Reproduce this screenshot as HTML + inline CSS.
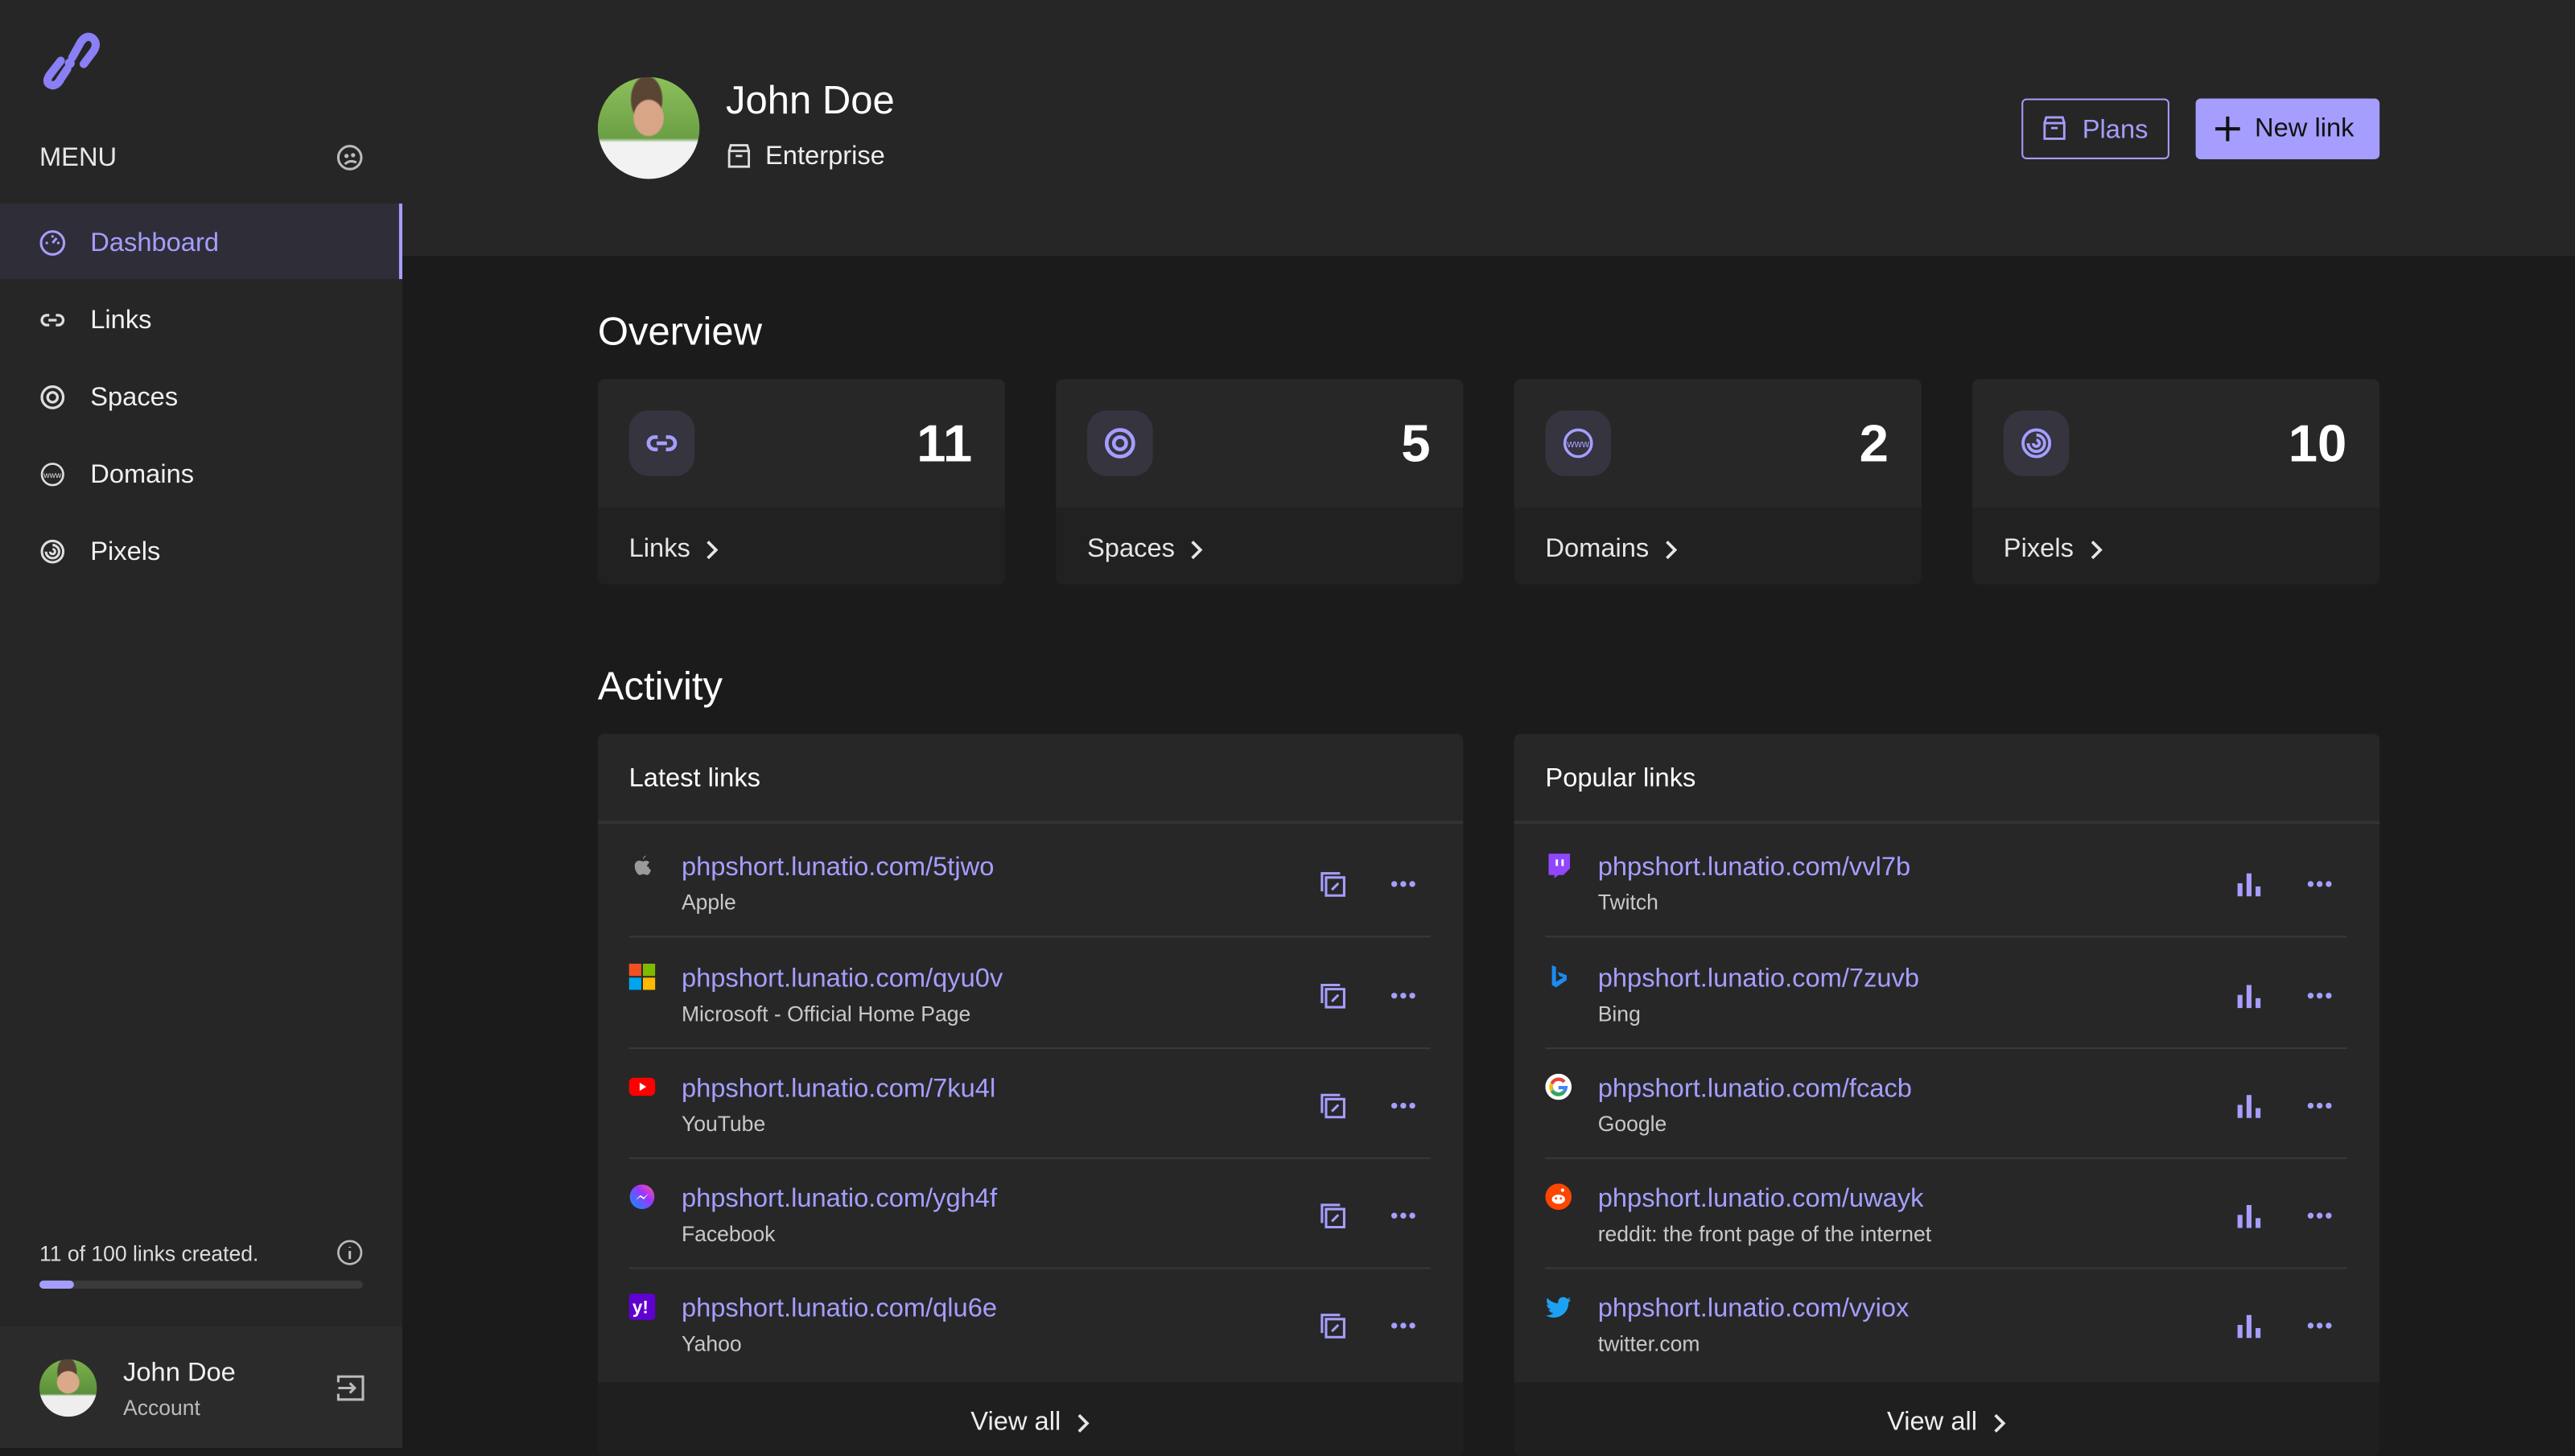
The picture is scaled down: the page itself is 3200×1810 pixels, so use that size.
<!DOCTYPE html>
<html><head><meta charset="utf-8">
<style>
*{box-sizing:border-box;margin:0;padding:0}
html,body{width:3200px;height:1800px;overflow:hidden;background:#1b1b1b}
#w{position:absolute;left:0;top:0;width:1568px;height:882px;transform:scale(2.04082);transform-origin:0 0;font-family:"Liberation Sans",sans-serif;color:#eee;background:#1b1b1b}
.a{position:absolute}
.side{left:0;top:0;width:245px;height:882px;background:#262626}
.nav{position:absolute;left:0;width:245px;height:46px;display:flex;align-items:center;padding-left:24px;padding-top:3px;font-size:16px;color:#f0f0f0}
.nav svg{width:16px;height:16px;margin-right:15px;margin-top:-2px}
.hdr{left:245px;top:0;width:1323px;height:156px;background:#262626}
.card{position:absolute;top:231px;width:248px;height:125px;border-radius:4px;overflow:hidden;background:#212121}
.card .t{height:78px;background:#272727;position:relative}
.card .ib{position:absolute;left:19px;top:19px;width:40px;height:40px;border-radius:12px;background:#35343f;display:flex;align-items:center;justify-content:center}
.card .n{position:absolute;right:20px;top:21px;font-size:32px;font-weight:bold;color:#fff}
.card .l{padding:17px 19px;font-size:16px;color:#e6e6e6;display:flex;align-items:center}
.chev{margin-left:8px}
.panel{position:absolute;top:447px;width:527px;height:440px;background:#272727;border-radius:4px;overflow:hidden}
.panel .h{height:55px;border-bottom:2px solid #333;padding:19px 19px;font-size:16px;color:#fff}
.row{position:absolute;left:19px;width:488px;height:67px;border-bottom:1px solid #393939}
.row .u{position:absolute;left:32px;top:16px;font-size:16px;color:#a59eff}
.row .s{position:absolute;left:32px;top:38px;font-size:13px;color:#c8c8c8}
.row .fi{position:absolute;left:0;top:15px;width:16px;height:16px}
.row .b1{position:absolute;left:420px;top:26px}
.row .b2{position:absolute;left:463px;top:26px}
.foot{position:absolute;left:0;bottom:0;width:527px;height:46px;background:#1f1f1f;font-size:16px;color:#eee;display:flex;justify-content:center;align-items:center;padding-top:4px}
</style></head><body><div id="w">
<div class="a side"></div>
<svg class="a" style="left:22px;top:15px" width="40" height="40" viewBox="0 0 40 40"><path d="M15 22 L8 31 Q5 36 10 37 Q13 37 15 33 L19 27" fill="none" stroke="#8a7ff5" stroke-width="5" stroke-linecap="round"/><path d="M22 20 L27 11 Q30 6 34 8 Q38 11 35 16 L29 24" fill="none" stroke="#8a7ff5" stroke-width="5" stroke-linecap="round"/><circle cx="20.5" cy="23.5" r="3" fill="#8a7ff5"/></svg>
<div class="a" style="left:24px;top:88px;font-size:16px;color:#e8e8e8">MENU</div>
<svg class="a" style="left:205px;top:88px" width="16" height="16" viewBox="0 0 16 16"><circle cx="8" cy="8" r="7" fill="none" stroke="#bbb" stroke-width="1.5"/><circle cx="6" cy="7" r="1.3" fill="#bbb"/><circle cx="10" cy="6.5" r="1.3" fill="#bbb"/><path d="M5 12 Q8 9 12 11" stroke="#bbb" fill="none" stroke-width="1.5"/></svg>
<div class="nav" style="top:124px;background:#2f2e38;border-right:2px solid #a59eff;color:#a59eff"><svg viewBox="0 0 16 16"><circle cx="8" cy="8" r="7" fill="none" stroke="#a59eff" stroke-width="1.5"/><path d="M8 8 L10.5 5" stroke="#a59eff" stroke-width="1.5"/><circle cx="8" cy="4" r=".8" fill="#a59eff"/><circle cx="4.5" cy="8" r=".8" fill="#a59eff"/><circle cx="11.5" cy="8" r=".8" fill="#a59eff"/></svg>Dashboard</div>
<div class="nav" style="top:171px"><svg viewBox="0 0 16 16"><path d="M6 5 H4.5 a3 3 0 0 0 0 6 H6 M10 5 h1.5 a3 3 0 0 1 0 6 H10 M5.5 8 h5" fill="none" stroke="#ddd" stroke-width="1.6"/></svg>Links</div>
<div class="nav" style="top:218px"><svg viewBox="0 0 16 16"><circle cx="8" cy="8" r="6.5" fill="none" stroke="#ddd" stroke-width="1.6"/><circle cx="8" cy="8" r="3" fill="none" stroke="#ddd" stroke-width="1.6"/></svg>Spaces</div>
<div class="nav" style="top:265px"><svg viewBox="0 0 16 16"><circle cx="8" cy="8" r="6.5" fill="none" stroke="#ddd" stroke-width="1.3"/><text x="8" y="10" font-size="5" fill="#ddd" text-anchor="middle" font-family="Liberation Sans">www</text></svg>Domains</div>
<div class="nav" style="top:312px"><svg viewBox="0 0 16 16"><circle cx="8" cy="8" r="6.5" fill="none" stroke="#ddd" stroke-width="1.5"/><path d="M8 4 a4 4 0 1 1 -4 4 M8 6.5 a1.5 1.5 0 1 1 -1.5 1.5" fill="none" stroke="#ddd" stroke-width="1.5"/></svg>Pixels</div>
<div class="a" style="left:24px;top:756px;font-size:13px;color:#ddd">11 of 100 links created.</div>
<svg class="a" style="left:205px;top:755px" width="16" height="16" viewBox="0 0 16 16"><circle cx="8" cy="8" r="7" fill="none" stroke="#bbb" stroke-width="1.3"/><path d="M8 7 v5 M8 4.5 v.5" stroke="#bbb" stroke-width="1.5"/></svg>
<div class="a" style="left:24px;top:780px;width:197px;height:5px;border-radius:3px;background:#3a3a3a"><div style="width:21px;height:5px;border-radius:3px;background:#a59eff"></div></div>
<div class="a" style="left:0;top:808px;width:245px;height:74px;background:#2b2b2c"></div>
<div class="a" style="left:24px;top:828px;width:35px;height:35px;border-radius:50%;background:radial-gradient(circle at 50% 40%,#d9a98a 0 24%,transparent 26%),radial-gradient(ellipse at 48% 22%,#5a4535 0 22%,transparent 24%),linear-gradient(#7bb24d,#5b8f3a 60%,#eee 64%)"></div>
<div class="a" style="left:75px;top:828px;font-size:16px;color:#f0f0f0">John Doe</div>
<div class="a" style="left:75px;top:850px;font-size:13px;color:#bbb">Account</div>
<svg class="a" style="left:205px;top:837px" width="17" height="17" viewBox="0 0 17 17"><path d="M1 5 V1.5 H16 V15.5 H1 V12 M1 8.5 H11 M8 5.5 L11 8.5 L8 11.5" fill="none" stroke="#bbb" stroke-width="1.5"/></svg>

<div class="a hdr"></div>
<div class="a" style="left:364px;top:47px;width:62px;height:62px;border-radius:50%;background:radial-gradient(ellipse at 50% 40%,#d8a587 0 20%,transparent 22%),radial-gradient(ellipse at 48% 22%,#5a4535 0 20%,transparent 22%),linear-gradient(#8cc05a,#6b9f45 60%,#f2f2f2 64%)"></div>
<div class="a" style="left:442px;top:48px;font-size:24px;color:#fff">John Doe</div>
<svg class="a" style="left:442px;top:87px" width="16" height="16" viewBox="0 0 16 16"><path d="M2 5 H14 V14.5 H2 Z M2 5 L3 1.5 H13 L14 5 M6 8 H10" fill="none" stroke="#ddd" stroke-width="1.4"/></svg>
<div class="a" style="left:466px;top:87px;font-size:16px;color:#eee">Enterprise</div>
<div class="a" style="left:1231px;top:60px;width:90px;height:37px;border:1px solid #a59eff;border-radius:3px;color:#a59eff;font-size:16px;padding:10px 0 0 36px">Plans</div>
<svg class="a" style="left:1243px;top:70px" width="16" height="16" viewBox="0 0 16 16"><path d="M2 5 H14 V14.5 H2 Z M2 5 L3 1.5 H13 L14 5 M6 8 H10" fill="none" stroke="#a59eff" stroke-width="1.4"/></svg>
<div class="a" style="left:1337px;top:60px;width:112px;height:37px;background:#a59eff;border-radius:3px;color:#111;font-size:16px;padding:10px 0 0 36px">New link</div>
<svg class="a" style="left:1348px;top:70px" width="17" height="17" viewBox="0 0 17 17"><path d="M8.5 1 V16 M1 8.5 H16" stroke="#111" stroke-width="2"/></svg>

<div class="a" style="left:364px;top:189px;font-size:24px;color:#fff">Overview</div>
<div class="card" style="left:364px"><div class="t"><div class="ib"><svg width="20" height="20" viewBox="0 0 16 16"><path d="M6 5 H4.5 a3 3 0 0 0 0 6 H6 M10 5 h1.5 a3 3 0 0 1 0 6 H10 M5.5 8 h5" fill="none" stroke="#a59eff" stroke-width="1.8"/></svg></div><div class="n">11</div></div><div class="l">Links<svg class="chev" width="10" height="14" viewBox="0 0 10 14"><path d="M3 2 L8 7 L3 12" fill="none" stroke="#e6e6e6" stroke-width="1.8"/></svg></div></div>
<div class="card" style="left:643px"><div class="t"><div class="ib"><svg width="20" height="20" viewBox="0 0 16 16"><circle cx="8" cy="8" r="6.5" fill="none" stroke="#a59eff" stroke-width="1.8"/><circle cx="8" cy="8" r="3" fill="none" stroke="#a59eff" stroke-width="1.8"/></svg></div><div class="n">5</div></div><div class="l">Spaces<svg class="chev" width="10" height="14" viewBox="0 0 10 14"><path d="M3 2 L8 7 L3 12" fill="none" stroke="#e6e6e6" stroke-width="1.8"/></svg></div></div>
<div class="card" style="left:922px"><div class="t"><div class="ib"><svg width="20" height="20" viewBox="0 0 16 16"><circle cx="8" cy="8" r="6.5" fill="none" stroke="#a59eff" stroke-width="1.4"/><text x="8" y="10" font-size="5" fill="#a59eff" text-anchor="middle" font-family="Liberation Sans">www</text></svg></div><div class="n">2</div></div><div class="l">Domains<svg class="chev" width="10" height="14" viewBox="0 0 10 14"><path d="M3 2 L8 7 L3 12" fill="none" stroke="#e6e6e6" stroke-width="1.8"/></svg></div></div>
<div class="card" style="left:1201px"><div class="t"><div class="ib"><svg width="20" height="20" viewBox="0 0 16 16"><circle cx="8" cy="8" r="6.5" fill="none" stroke="#a59eff" stroke-width="1.5"/><path d="M8 4 a4 4 0 1 1 -4 4 M8 6.5 a1.5 1.5 0 1 1 -1.5 1.5" fill="none" stroke="#a59eff" stroke-width="1.5"/></svg></div><div class="n">10</div></div><div class="l">Pixels<svg class="chev" width="10" height="14" viewBox="0 0 10 14"><path d="M3 2 L8 7 L3 12" fill="none" stroke="#e6e6e6" stroke-width="1.8"/></svg></div></div>

<div class="a" style="left:364px;top:405px;font-size:24px;color:#fff">Activity</div>

<div class="panel" style="left:364px"><div class="h">Latest links</div>
<div class="row" style="top:57px"><svg class="fi" viewBox="0 0 16 16"><path d="M11 9 c0-2 1.5-2.5 1.5-2.5 c-1-1.5-2.5-1.3-3-1 c-.7.3-1.3.3-2 0 c-2-.8-4 .5-4 3 c0 3 2 5.5 3 5.5 c1 0 1.2-.5 2.3-.5 c1.1 0 1.3.5 2.3.5 c1 0 2-2 2.3-3 c-1.5-.6-1.4-2-1.4-2z M8.5 4.5 c0-1.2 1-2.2 2-2.3" fill="#9a9a9a"/></svg><div class="u">phpshort.lunatio.com/5tjwo</div><div class="s">Apple</div>
<svg class="b1" width="17" height="17" viewBox="0 0 17 17"><path d="M2 13 V2 H13 M4.5 4.5 H15.5 V15.5 H4.5 Z M8 12 L12 8" fill="none" stroke="#a59eff" stroke-width="1.5"/></svg><svg class="b2" width="17" height="17" viewBox="0 0 17 17"><circle cx="3" cy="8.5" r="1.8" fill="#a59eff"/><circle cx="8.5" cy="8.5" r="1.8" fill="#a59eff"/><circle cx="14" cy="8.5" r="1.8" fill="#a59eff"/></svg></div>
<div class="row" style="top:125px"><svg class="fi" viewBox="0 0 16 16"><rect x="0" y="0" width="7.5" height="7.5" fill="#f25022"/><rect x="8.5" y="0" width="7.5" height="7.5" fill="#7fba00"/><rect x="0" y="8.5" width="7.5" height="7.5" fill="#00a4ef"/><rect x="8.5" y="8.5" width="7.5" height="7.5" fill="#ffb900"/></svg><div class="u">phpshort.lunatio.com/qyu0v</div><div class="s">Microsoft - Official Home Page</div>
<svg class="b1" width="17" height="17" viewBox="0 0 17 17"><path d="M2 13 V2 H13 M4.5 4.5 H15.5 V15.5 H4.5 Z M8 12 L12 8" fill="none" stroke="#a59eff" stroke-width="1.5"/></svg><svg class="b2" width="17" height="17" viewBox="0 0 17 17"><circle cx="3" cy="8.5" r="1.8" fill="#a59eff"/><circle cx="8.5" cy="8.5" r="1.8" fill="#a59eff"/><circle cx="14" cy="8.5" r="1.8" fill="#a59eff"/></svg></div>
<div class="row" style="top:192px"><svg class="fi" viewBox="0 0 16 16"><rect x="0" y="2.5" width="16" height="11" rx="3" fill="#f00"/><path d="M6.5 5.5 L10.5 8 L6.5 10.5Z" fill="#fff"/></svg><div class="u">phpshort.lunatio.com/7ku4l</div><div class="s">YouTube</div>
<svg class="b1" width="17" height="17" viewBox="0 0 17 17"><path d="M2 13 V2 H13 M4.5 4.5 H15.5 V15.5 H4.5 Z M8 12 L12 8" fill="none" stroke="#a59eff" stroke-width="1.5"/></svg><svg class="b2" width="17" height="17" viewBox="0 0 17 17"><circle cx="3" cy="8.5" r="1.8" fill="#a59eff"/><circle cx="8.5" cy="8.5" r="1.8" fill="#a59eff"/><circle cx="14" cy="8.5" r="1.8" fill="#a59eff"/></svg></div>
<div class="row" style="top:259px"><svg class="fi" viewBox="0 0 16 16"><defs><linearGradient id="mg" x1="0" y1="1" x2="1" y2="0"><stop offset="0" stop-color="#0099ff"/><stop offset=".6" stop-color="#a033ff"/><stop offset="1" stop-color="#ff5c87"/></linearGradient></defs><circle cx="8" cy="8" r="7.5" fill="url(#mg)"/><path d="M4 10 L7 7 L9 8.5 L12 6 L9 9.5 L7 8 Z" fill="#fff"/></svg><div class="u">phpshort.lunatio.com/ygh4f</div><div class="s">Facebook</div>
<svg class="b1" width="17" height="17" viewBox="0 0 17 17"><path d="M2 13 V2 H13 M4.5 4.5 H15.5 V15.5 H4.5 Z M8 12 L12 8" fill="none" stroke="#a59eff" stroke-width="1.5"/></svg><svg class="b2" width="17" height="17" viewBox="0 0 17 17"><circle cx="3" cy="8.5" r="1.8" fill="#a59eff"/><circle cx="8.5" cy="8.5" r="1.8" fill="#a59eff"/><circle cx="14" cy="8.5" r="1.8" fill="#a59eff"/></svg></div>
<div class="row" style="top:326px;border:none"><svg class="fi" viewBox="0 0 16 16"><rect width="16" height="16" rx="2" fill="#6001d2"/><text x="7" y="12" font-size="11" font-weight="bold" fill="#fff" text-anchor="middle" font-family="Liberation Sans">y!</text></svg><div class="u">phpshort.lunatio.com/qlu6e</div><div class="s">Yahoo</div>
<svg class="b1" width="17" height="17" viewBox="0 0 17 17"><path d="M2 13 V2 H13 M4.5 4.5 H15.5 V15.5 H4.5 Z M8 12 L12 8" fill="none" stroke="#a59eff" stroke-width="1.5"/></svg><svg class="b2" width="17" height="17" viewBox="0 0 17 17"><circle cx="3" cy="8.5" r="1.8" fill="#a59eff"/><circle cx="8.5" cy="8.5" r="1.8" fill="#a59eff"/><circle cx="14" cy="8.5" r="1.8" fill="#a59eff"/></svg></div>
<div class="foot" style="height:45px">View all<svg class="chev" width="10" height="14" viewBox="0 0 10 14"><path d="M3 2 L8 7 L3 12" fill="none" stroke="#e6e6e6" stroke-width="1.8"/></svg></div>
</div>

<div class="panel" style="left:922px"><div class="h">Popular links</div>
<div class="row" style="top:57px"><svg class="fi" viewBox="0 0 16 16"><path d="M2 1 H15 V10 L11 14 H8 L5.5 16 V14 H2 Z" fill="#9146ff"/><path d="M7 4.5 V8.5 M10.5 4.5 V8.5" stroke="#fff" stroke-width="1.4"/></svg><div class="u">phpshort.lunatio.com/vvl7b</div><div class="s">Twitch</div>
<svg class="b1" width="17" height="17" viewBox="0 0 17 17"><path d="M3 16 V8 M8.5 16 V2 M14 16 V10" stroke="#a59eff" stroke-width="3"/></svg><svg class="b2" width="17" height="17" viewBox="0 0 17 17"><circle cx="3" cy="8.5" r="1.8" fill="#a59eff"/><circle cx="8.5" cy="8.5" r="1.8" fill="#a59eff"/><circle cx="14" cy="8.5" r="1.8" fill="#a59eff"/></svg></div>
<div class="row" style="top:125px"><svg class="fi" viewBox="0 0 16 16"><path d="M4 1 L6.5 2 V11 L11 8.5 L8.5 7.5 L7.5 5 L13 7 V10 L6.5 14.5 L4 13 Z" fill="#1a8bf0"/></svg><div class="u">phpshort.lunatio.com/7zuvb</div><div class="s">Bing</div>
<svg class="b1" width="17" height="17" viewBox="0 0 17 17"><path d="M3 16 V8 M8.5 16 V2 M14 16 V10" stroke="#a59eff" stroke-width="3"/></svg><svg class="b2" width="17" height="17" viewBox="0 0 17 17"><circle cx="3" cy="8.5" r="1.8" fill="#a59eff"/><circle cx="8.5" cy="8.5" r="1.8" fill="#a59eff"/><circle cx="14" cy="8.5" r="1.8" fill="#a59eff"/></svg></div>
<div class="row" style="top:192px"><svg class="fi" viewBox="0 0 16 16"><circle cx="8" cy="8" r="8" fill="#fff"/><path d="M11.5 5 A4.5 4.5 0 1 0 12.5 8.5 H8" fill="none" stroke="#4285f4" stroke-width="2"/><path d="M4 6 A4.5 4.5 0 0 1 11.5 5" fill="none" stroke="#ea4335" stroke-width="2"/><path d="M4 10.5 A4.5 4.5 0 0 1 4 6" fill="none" stroke="#fbbc05" stroke-width="2"/><path d="M4 10.5 A4.5 4.5 0 0 0 11.5 11" fill="none" stroke="#34a853" stroke-width="2"/></svg><div class="u">phpshort.lunatio.com/fcacb</div><div class="s">Google</div>
<svg class="b1" width="17" height="17" viewBox="0 0 17 17"><path d="M3 16 V8 M8.5 16 V2 M14 16 V10" stroke="#a59eff" stroke-width="3"/></svg><svg class="b2" width="17" height="17" viewBox="0 0 17 17"><circle cx="3" cy="8.5" r="1.8" fill="#a59eff"/><circle cx="8.5" cy="8.5" r="1.8" fill="#a59eff"/><circle cx="14" cy="8.5" r="1.8" fill="#a59eff"/></svg></div>
<div class="row" style="top:259px"><svg class="fi" viewBox="0 0 16 16"><circle cx="8" cy="8" r="8" fill="#ff4500"/><ellipse cx="8" cy="9.5" rx="4" ry="2.8" fill="#fff"/><circle cx="10.5" cy="4" r="1" fill="#fff"/><circle cx="6.5" cy="9" r=".7" fill="#ff4500"/><circle cx="9.5" cy="9" r=".7" fill="#ff4500"/></svg><div class="u">phpshort.lunatio.com/uwayk</div><div class="s">reddit: the front page of the internet</div>
<svg class="b1" width="17" height="17" viewBox="0 0 17 17"><path d="M3 16 V8 M8.5 16 V2 M14 16 V10" stroke="#a59eff" stroke-width="3"/></svg><svg class="b2" width="17" height="17" viewBox="0 0 17 17"><circle cx="3" cy="8.5" r="1.8" fill="#a59eff"/><circle cx="8.5" cy="8.5" r="1.8" fill="#a59eff"/><circle cx="14" cy="8.5" r="1.8" fill="#a59eff"/></svg></div>
<div class="row" style="top:326px;border:none"><svg class="fi" viewBox="0 0 16 16"><path d="M15.5 3.5 c-.6.3-1.2.4-1.8.5 c.7-.4 1.1-1 1.4-1.7 c-.6.4-1.3.6-2 .8 a3.1 3.1 0 0 0 -5.3 2.8 C5.2 5.8 2.9 4.6 1.3 2.7 c-.9 1.5-.4 3.4 1 4.2 c-.5 0-1-.2-1.4-.4 c0 1.5 1.1 2.8 2.5 3.1 c-.5.1-1 .2-1.4.1 c.4 1.3 1.6 2.1 2.9 2.2 A6.3 6.3 0 0 1 .4 13.2 a8.9 8.9 0 0 0 13.7-7.9 c.6-.4 1.1-1 1.4-1.8z" fill="#1da1f2"/></svg><div class="u">phpshort.lunatio.com/vyiox</div><div class="s">twitter.com</div>
<svg class="b1" width="17" height="17" viewBox="0 0 17 17"><path d="M3 16 V8 M8.5 16 V2 M14 16 V10" stroke="#a59eff" stroke-width="3"/></svg><svg class="b2" width="17" height="17" viewBox="0 0 17 17"><circle cx="3" cy="8.5" r="1.8" fill="#a59eff"/><circle cx="8.5" cy="8.5" r="1.8" fill="#a59eff"/><circle cx="14" cy="8.5" r="1.8" fill="#a59eff"/></svg></div>
<div class="foot" style="height:45px">View all<svg class="chev" width="10" height="14" viewBox="0 0 10 14"><path d="M3 2 L8 7 L3 12" fill="none" stroke="#e6e6e6" stroke-width="1.8"/></svg></div>
</div>
</div></body></html>
